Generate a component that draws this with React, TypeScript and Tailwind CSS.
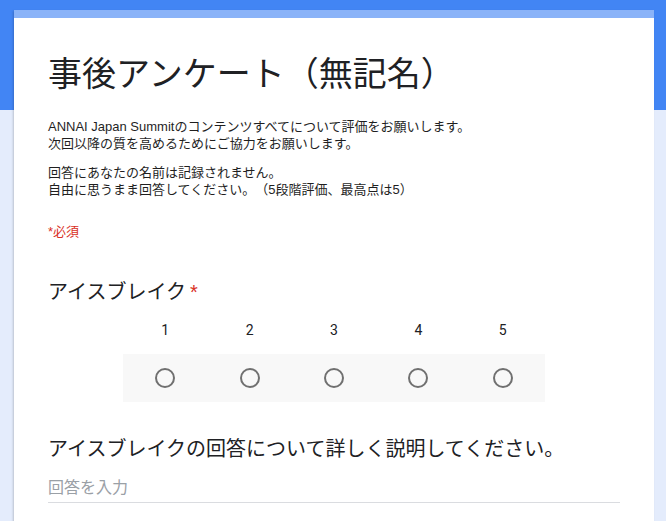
import React from "react";

const jp =
  "font-['Liberation_Sans','Noto_Sans_CJK_JP',sans-serif] [text-spacing-trim:space-all]";

function RadioScale() {
  const values = [1, 2, 3, 4, 5];
  return (
    <div className="w-[422px] mx-auto">
      <div className="grid grid-cols-5 text-[14px] leading-[17px] text-[#202124] font-['Roboto',sans-serif]">
        {values.map((v) => (
          <div key={v} className="text-center">
            {v}
          </div>
        ))}
      </div>
      <div className="grid grid-cols-5 h-12 mt-[15px] bg-[#f8f8f8] items-center">
        {values.map((v) => (
          <div key={v} className="flex justify-center">
            <span className="block size-5 rounded-full border-2 border-[#707070]" />
          </div>
        ))}
      </div>
    </div>
  );
}

export default function App() {
  return (
    <div
      className={`min-h-screen bg-[linear-gradient(to_bottom,#4285f4_110px,#e4ecfc_110px)] pt-[10px] pl-[14px] pr-3 ${jp}`}
    >
      <div className="w-[640px] bg-white shadow-[-1px_1px_2px_rgba(0,0,0,0.18)]">
        <div className="h-2 bg-[#8ab3f8]" />
        <div className="px-[34px] pt-9 pb-10">
          <h1 className="text-[34px] leading-[40px] text-[#202124] font-normal">
            事後アンケート（無記名）
          </h1>
          <div className="mt-6 text-[13px] leading-[17px] text-[#1f1f1f]">
            <p>
              ANNAI Japan Summitのコンテンツすべてについて評価をお願いします。
              <br />
              次回以降の質を高めるためにご協力をお願いします。
            </p>
            <p className="mt-3">
              回答にあなたの名前は記録されません。
              <br />
              自由に思うまま回答してください。（5段階評価、最高点は5）
            </p>
          </div>
          <div className="mt-[25px] text-[13px] leading-[17px] text-[#d93025]">
            *必須
          </div>

          <div className="mt-10 text-[20px] leading-6 text-[#202124]">
            アイスブレイク<span className="text-[#d93025] ml-1">*</span>
          </div>
          <div className="mt-[18px]">
            <RadioScale />
          </div>

          <div className="mt-[35px] text-[20px] leading-6 text-[#202124]">
            アイスブレイクの回答について詳しく説明してください。
          </div>
          <div className="mt-[17px] pb-1 border-b border-[#dadce0] text-[16px] leading-5 text-[#9aa0a6]">
            回答を入力
          </div>
        </div>
      </div>
    </div>
  );
}
